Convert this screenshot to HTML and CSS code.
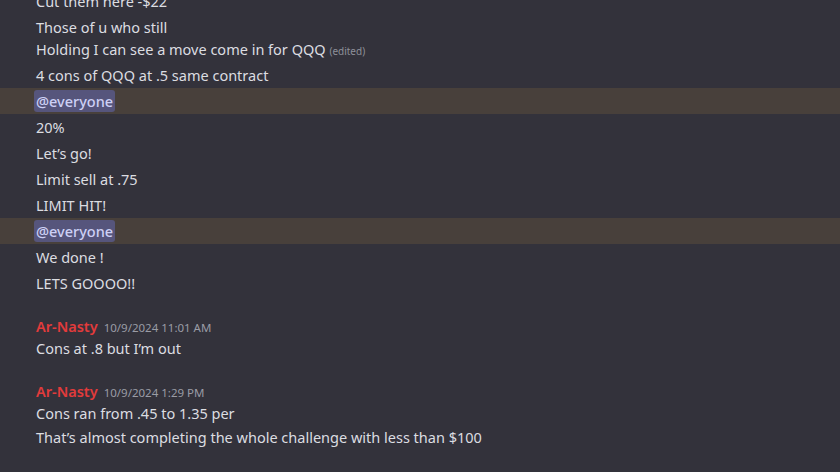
FILE: index.html
```html
<!DOCTYPE html>
<html lang="en">
<head>
  <meta charset="UTF-8">
  <title>Chat</title>
  <link rel="stylesheet" href="styles.css">
</head>
<body>
  <div class="chat">
    <div class="msg">Cut them here -$22</div>
    <div class="msg">Those of u who still<br>Holding I can see a move come in for QQQ <span class="edited">(edited)</span></div>
    <div class="msg">4 cons of QQQ at .5 same contract</div>
    <div class="msg mentioned"><span class="mention">@everyone</span></div>
    <div class="msg">20%</div>
    <div class="msg">Let’s go!</div>
    <div class="msg">Limit sell at .75</div>
    <div class="msg">LIMIT HIT!</div>
    <div class="msg mentioned"><span class="mention">@everyone</span></div>
    <div class="msg">We done !</div>
    <div class="msg">LETS GOOOO!!</div>

    <div class="group">
      <div class="header"><span class="name">Ar-Nasty</span><span class="time">10/9/2024 11:01 AM</span></div>
      <div class="line">Cons at .8 but I’m out</div>
    </div>

    <div class="group">
      <div class="header"><span class="name">Ar-Nasty</span><span class="time">10/9/2024 1:29 PM</span></div>
      <div class="line">Cons ran from .45 to 1.35 per</div>
      <div class="msg">That’s almost completing the whole challenge with less than $100</div>
    </div>
  </div>
</body>
</html>
```

FILE: styles.css
```css
body {
  margin: 0;
  background-color: #33323b;
  font-family: 'Noto Sans', 'Open Sans', sans-serif;
  color: #dcdde1;
  overflow: hidden;
}

.chat {
  margin-top: -12px;
  font-size: 14.5px;
  line-height: 22px;
}

.msg {
  padding: 2px 0 2px 36px;
}

.mentioned {
  background-color: #48403b;
}

.mention {
  background-color: #56557c;
  color: #cdd0f5;
  font-weight: 500;
  border-radius: 3px;
  padding: 1px 2px;
  margin-left: -2px;
}

.edited {
  font-size: 10px;
  line-height: 1;
  color: #8e9099;
}

.group {
  margin-top: 17px;
  padding: 2px 0;
}

.header,
.line {
  padding-left: 36px;
}

.name {
  color: #e23b3b;
  font-weight: 600;
}

.time {
  font-size: 11.5px;
  line-height: 1;
  color: #9a9ca5;
  margin-left: 6px;
}
```
